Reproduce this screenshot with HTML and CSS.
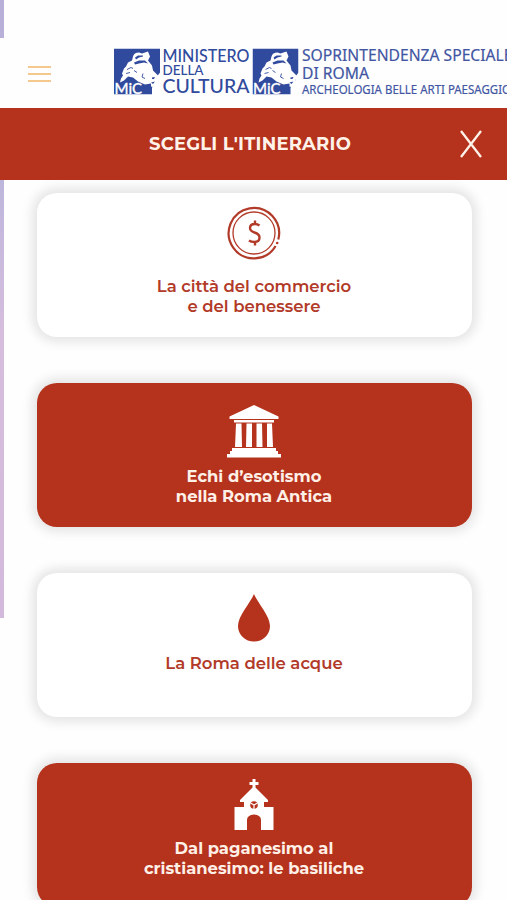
FILE: index.html
```html
<!DOCTYPE html>
<html lang="it">
<head>
<meta charset="utf-8">
<meta name="viewport" content="width=device-width">
<title>Scegli l'itinerario</title>
<link rel="stylesheet" href="styles.css">
</head>
<body>
<svg class="defs" width="0" height="0" aria-hidden="true">
  <symbol id="mic" viewBox="0 0 46 46">
    <path fill="#304a9d" d="M0 0H46V24L43 28L43 35L38 39V46H0Z"/>
    <path fill="#fff" d="M19 8Q20 4 25 4L28 5L34 3L36 8L34 12L38 17L39 22L43 26L46 29L43 31L44 35L41 39L37 38V35L31 36L24 33L19 29L14 28L10 32L6 34L7 30L9 27L8 25L10 20L12 18L14 14L18 12Z"/>
    <path fill="#304a9d" d="M21 9L24 7L29 7L29 8L25 9L22 11ZM20 14L25 12L31 12L34 15L30 14L25 15L21 16ZM38 29L41 28.500L40 30.500H38ZM37 34L41 33L39 35.500Z"/>
    <path fill="none" stroke="#304a9d" stroke-width=".9" d="M13 21L17 19L19 20M29 25L28 28.500L31 30M20 22L23 24M12 25L16 24"/>
    <text x=".5" y="45.500" fill="#fff" stroke="#fff" stroke-width=".3" font-family="Lato" font-weight="500" font-size="16" textLength="27.500" lengthAdjust="spacingAndGlyphs">MiC</text>
  </symbol>
</svg>
<header class="top">
  <button class="burger" aria-label="Menu"><i></i><i></i><i></i></button>
  <svg class="logos" width="397" height="54" viewBox="0 0 397 54">
    <use href="#mic" x="4" y="4.500" width="46" height="46"/>
    <g class="ministry">
      <text x="52.5" y="17.500" font-size="17" textLength="87" lengthAdjust="spacingAndGlyphs">MINISTERO</text>
      <text x="52.5" y="31" font-size="14" textLength="41" lengthAdjust="spacingAndGlyphs">DELLA</text>
      <text x="52.5" y="48.500" font-size="19" textLength="87" lengthAdjust="spacingAndGlyphs">CULTURA</text>
    </g>
    <use href="#mic" x="142.500" y="4.500" width="46" height="46"/>
    <g class="office">
      <text x="192" y="17" font-size="17" textLength="210.500" lengthAdjust="spacingAndGlyphs">SOPRINTENDENZA SPECIALE</text>
      <text x="192" y="35" font-size="17" textLength="67" lengthAdjust="spacingAndGlyphs">DI ROMA</text>
      <text x="192" y="50" font-size="13" textLength="209" lengthAdjust="spacingAndGlyphs">ARCHEOLOGIA BELLE ARTI PAESAGGIO</text>
    </g>
  </svg>
</header>
<div class="title-bar">
  <h1>SCEGLI L'ITINERARIO</h1>
  <button class="close" aria-label="Chiudi"><svg width="24" height="28" viewBox="0 0 24 28"><path d="M2 1L22 27M22 1L2 27" stroke="#fff2e9" stroke-width="2.300"/></svg></button>
</div>
<main class="routes">
  <a class="route">
    <svg width="54" height="54" viewBox="0 0 54 54" fill="none" stroke="#b23a28">
      <path stroke-width="2.2" d="M51.300 33.500A25.200 25.200 0 1 0 48.600 40"/>
      <circle cx="27" cy="27" r="21" stroke-width="1.3"/>
      <circle cx="50.200" cy="37" r="1.3" fill="#b23a28" stroke="none"/>
      <path stroke-width="2.4" d="M32.500 19.500Q30.500 18 28 18Q23 18 23 22Q23 25 27.500 26.500Q32.500 28 32.500 31.500Q32.500 36 27.500 36Q24 36 22 34.500M28 14.500V18M28 36V39.500"/>
    </svg>
    <span>La città del commercio<br>e del benessere</span>
  </a>
  <a class="route red">
    <svg width="56" height="54" viewBox="0 0 56 54" fill="#fff">
      <path d="M28 0L52.5 11.500V14H3.500V11.500ZM8 15H48V17.500H8ZM10 18.500H15.500L16 42H9ZM20.500 18.500H26V42H20ZM30.500 18.500H36L36.500 42H30.500ZM41 18.500H46L47 42H41ZM6 43H50V46H52V49H55V52.500H1V49H4V46H6Z"/>
    </svg>
    <span>Echi d’esotismo<br>nella Roma Antica</span>
  </a>
  <a class="route drop">
    <svg width="34" height="49" viewBox="0 0 34 49"><path fill="#b5321c" d="M17 0C13 9.500 1 22 1 32A16 15.500 0 0 0 33 32C33 22 21 9.500 17 0Z"/></svg>
    <span>La Roma delle acque</span>
  </a>
  <a class="route red church">
    <svg width="40" height="52" viewBox="0 0 40 52">
      <path fill="#fff" d="M18.500 0H21.500V3H24.500V6H21.500V8.500L34 21V23H30V28H39.500V51H27V41Q27 36 20 35.500Q13 36 13 41V51H.5V28H10V23H6V21L18.500 8.500V6H15.500V3H18.500Z"/>
      <circle cx="20" cy="26" r="3.800" fill="#b5321c"/><path d="M20 26V30M20 26L16.500 24M20 26L23.500 24" stroke="#fff" stroke-width="1.200"/>
    </svg>
    <span>Dal paganesimo al<br>cristianesimo: le basiliche</span>
  </a>
</main>
</body>
</html>
```

FILE: styles.css
```css
* { box-sizing: border-box; }
html, body { height: 900px; overflow: hidden; }
body { margin: 0; background: #fefefe; font-family: Montserrat, Inter, sans-serif; }
button { border: 0; padding: 0; background: none; }
.defs { display: block; }
.top { height: 108px; display: flex; align-items: flex-start; padding-top: 44px;
  background: linear-gradient(#b9b0da, #b9b0da) 0 0 / 4px 38px no-repeat; }
.burger { width: 23px; margin: 22px 59px 0 28px; display: flex; flex-direction: column; gap: 5px; flex: none; }
.burger i { height: 2px; background: #f5c88e; }
.logos { display: block; flex: none; }
.ministry { font-family: Lato, sans-serif; font-weight: 500; fill: #304a9d; }
.office { font-family: "Noto Sans", sans-serif; fill: #4155a2; stroke: #4155a2; stroke-width: .2px; }
.title-bar { height: 72px; background: #b5321c; display: grid; grid-template-columns: 48px 1fr 48px; align-items: center; }
h1 { grid-column: 2; margin: 0 7px 0 0; color: #fff2e9; font-size: 18px; font-weight: 700; line-height: 24px; text-align: center; letter-spacing: .2px; white-space: nowrap; }
.close { width: 24px; height: 28px; }
.close svg { display: block; }
.routes { height: 720px; padding: 13px 35px 0 37px; display: flex; flex-direction: column; gap: 46px; overflow: hidden;
  background: linear-gradient(#bdb6dc, #d6bddd 35%, #d3b9db) 0 0 / 4px 438px no-repeat; }
.route { flex: none; height: 144px; border-radius: 20px; background: #fff; color: #b23a28;
  box-shadow: 0 0 11px 5px rgba(0, 0, 0, .1); display: flex; flex-direction: column; align-items: center;
  padding: 13px 1px 0 0; font-size: 16.5px; font-weight: 600; line-height: 20px; text-align: center; }
.route svg { display: block; margin-bottom: 16px; }
.red { background: #b5321c; color: #fff0e7; padding-top: 22px; font-weight: 700; font-size: 16.35px; }
.red svg { margin-bottom: 7px; }
.drop { padding-top: 21px; }
.drop svg { margin-bottom: 10px; }
.church { padding-top: 16px; }
```
